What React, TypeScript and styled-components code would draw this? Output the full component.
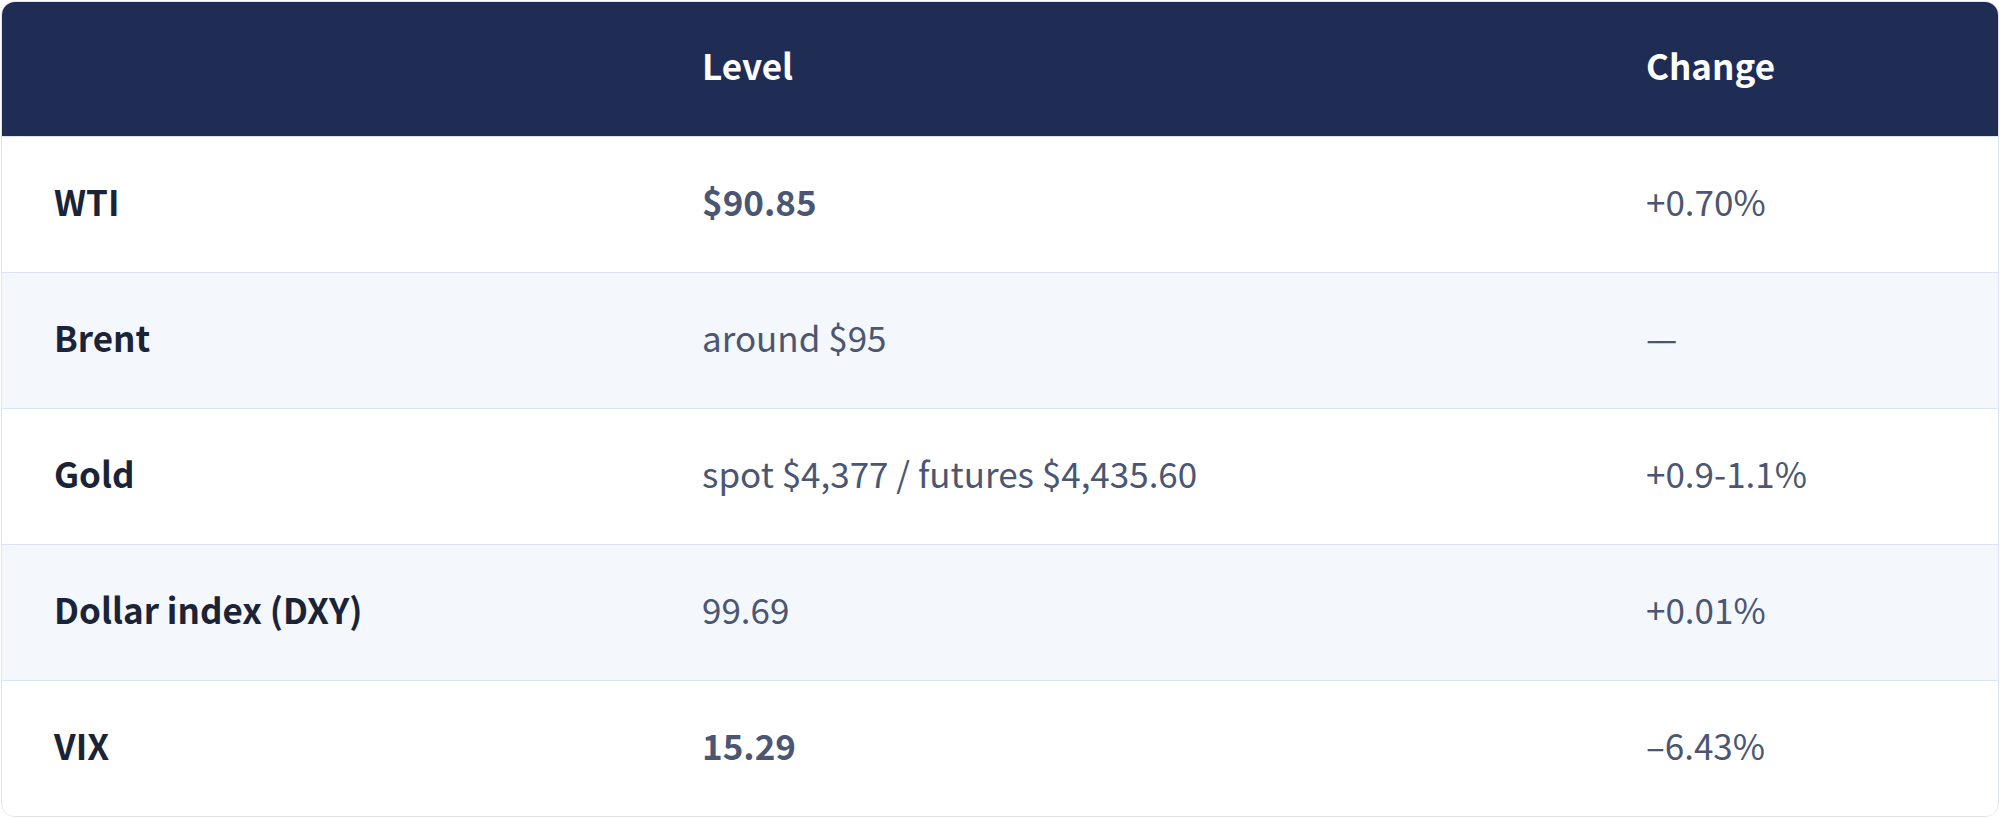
import React from 'react';
import styled, { createGlobalStyle } from 'styled-components';

const GlobalStyle = createGlobalStyle`
	html, body {
		margin: 0;
		padding: 0;
		background: #ffffff;
	}
	body {
		font-family: 'Noto Sans CJK KR', 'Noto Sans', sans-serif;
	}
`;

interface Row {
	label: string;
	level: string;
	change: string;
	strong?: boolean;
}

const rows: Row[] = [
	{ label: 'WTI', level: '$90.85', change: '+0.70%', strong: true },
	{ label: 'Brent', level: 'around $95', change: '—' },
	{ label: 'Gold', level: 'spot $4,377 / futures $4,435.60', change: '+0.9-1.1%' },
	{ label: 'Dollar index (DXY)', level: '99.69', change: '+0.01%' },
	{ label: 'VIX', level: '15.29', change: '–6.43%', strong: true },
];

function App() {
	return (
		<>
			<GlobalStyle />
			<Card>
				<Head>
					<HeadCell />
					<HeadCell>Level</HeadCell>
					<HeadCell>Change</HeadCell>
				</Head>
				{rows.map((row, i) => (
					<BodyRow key={row.label} striped={i % 2 === 1}>
						<Label>{row.label}</Label>
						<Value strong={row.strong}>{row.level}</Value>
						<Value>{row.change}</Value>
					</BodyRow>
				))}
			</Card>
		</>
	);
}

const Card = styled.div`
	margin: 1px;
	height: 814px;
	border: 1px solid #dde3ef;
	border-radius: 14px;
	overflow: hidden;
	display: flex;
	flex-direction: column;
`;

const Head = styled.div`
	display: grid;
	grid-template-columns: 648px 944px 1fr;
	height: 134px;
	background: #1f2c54;
`;

const HeadCell = styled.div`
	display: flex;
	align-items: center;
	padding: 0 0 9px 52px;
	color: #ffffff;
	font-size: 35px;
	font-weight: 700;
`;

const BodyRow = styled.div<{ striped?: boolean }>`
	display: grid;
	grid-template-columns: 648px 944px 1fr;
	height: 135px;
	border-top: 1px solid #dde3ef;
	background: ${(p) => (p.striped ? '#f4f7fc' : '#ffffff')};
`;

const Label = styled.div`
	display: flex;
	align-items: center;
	padding: 0 0 9px 52px;
	color: #1b2436;
	font-size: 35px;
	font-weight: 700;
`;

const Value = styled.div<{ strong?: boolean }>`
	display: flex;
	align-items: center;
	padding: 0 0 9px 52px;
	color: #4a5672;
	font-size: 35px;
	font-weight: ${(p) => (p.strong ? 700 : 400)};
`;

export default App;
